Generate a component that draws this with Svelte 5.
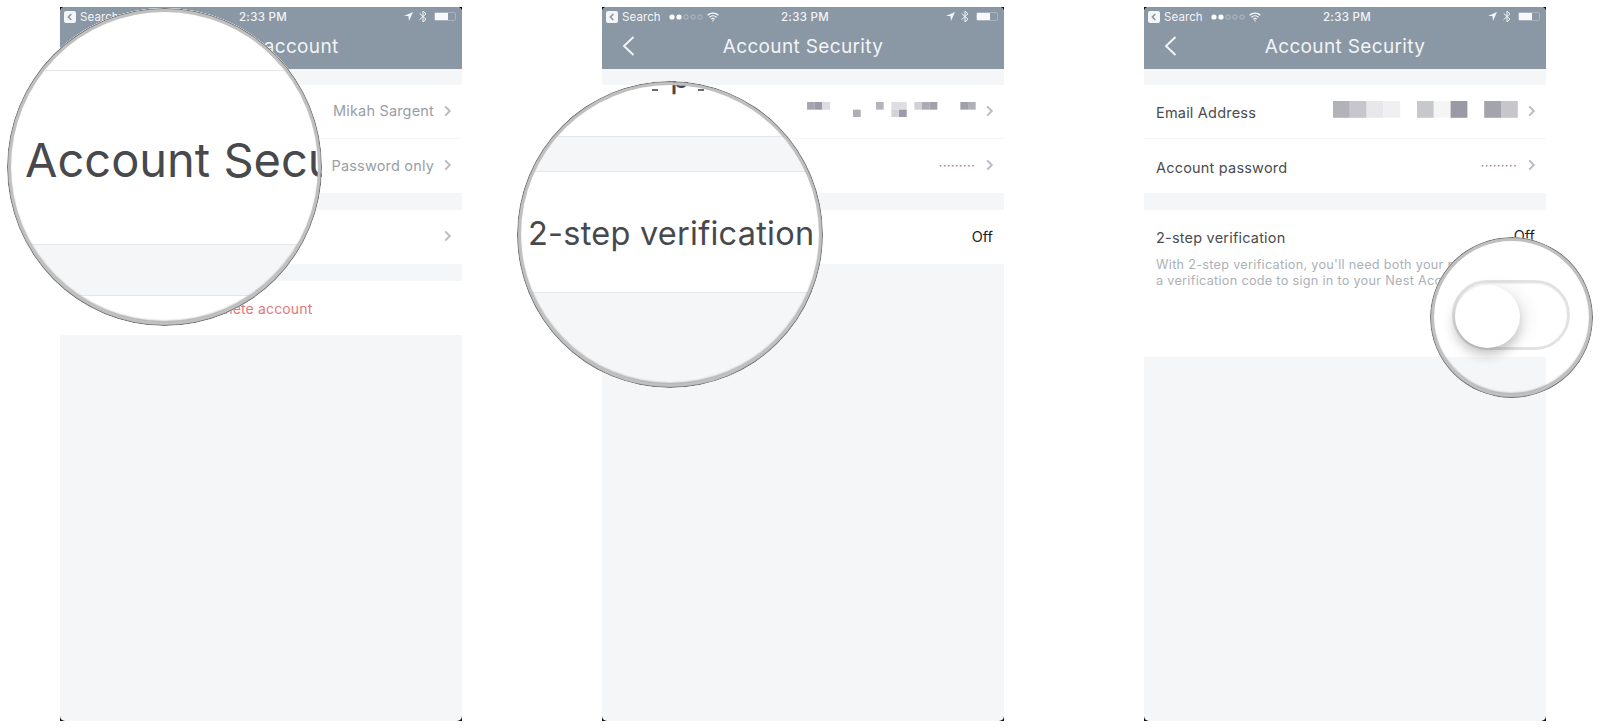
<script>
  const sansStack = "Inter";

  // mosaic used to hide the email address, [column, row, colour]
  const mosaicSmall = [
    [0, 0, "#a5a5b0"], [1, 0, "#9a9aa8"], [2, 0, "#dcdce2"],
    [6, 1, "#aeaeb6"], [9, 0, "#b4b4ba"], [11, 0, "#dedee2"], [12, 0, "#dedee2"],
    [11, 1, "#d2d2d8"], [12, 1, "#9a9aa8"], [14, 0, "#d0d0d6"], [15, 0, "#aaaab4"],
    [16, 0, "#a2a2ac"], [20, 0, "#a0a0ac"], [21, 0, "#b0b0b8"]
  ];
  const mosaicLarge = [
    [0, 0, "#b2b2ba"], [1, 0, "#c6c6cc"], [2, 0, "#e8e8ea"], [3, 0, "#f0f0f2"],
    [5, 0, "#c6c8cc"], [6, 0, "#f5f5f5"], [7, 0, "#9a9aa4"], [9, 0, "#a4a4ac"], [10, 0, "#c6c6cc"]
  ];
</script>

{#snippet statusBar(showCarrier)}
  <div class="status">
    <div class="status-left">
      <svg width="12" height="12" viewBox="0 0 12 12">
        <rect width="12" height="12" rx="2" fill="#f4f5f6" />
        <path d="M7.3 3 4.4 6l2.9 3" fill="none" stroke="#8a97a5" stroke-width="1.6" />
      </svg>
      <span>Search</span>
      {#if showCarrier}
        <svg class="dots" width="34" height="6" viewBox="0 0 34 6">
          <circle cx="3" cy="3" r="2.6" fill="#fff" />
          <circle cx="10" cy="3" r="2.6" fill="#fff" />
          <circle cx="17" cy="3" r="2.2" fill="none" stroke="#c4cad2" stroke-width=".7" />
          <circle cx="24" cy="3" r="2.2" fill="none" stroke="#c4cad2" stroke-width=".7" />
          <circle cx="31" cy="3" r="2.2" fill="none" stroke="#c4cad2" stroke-width=".7" />
        </svg>
        <svg width="12" height="10" viewBox="0 0 12 10" fill="none" stroke="#fff" stroke-width="1.2">
          <path d="M.6 3.2a7.8 7.8 0 0 1 10.8 0" />
          <path d="M2.5 5.2a5 5 0 0 1 7 0" />
          <path d="M4.4 7.1a2.3 2.3 0 0 1 3.2 0" />
          <circle cx="6" cy="8.7" r=".7" fill="#fff" stroke="none" />
        </svg>
      {/if}
    </div>
    <span class="clock">2:33 PM</span>
    <div class="status-right">
      <svg width="9" height="9" viewBox="0 0 9 9"><path d="M9 0 0 4h4.4L5 9z" fill="#f4f5f6" /></svg>
      <svg width="8" height="13" viewBox="0 0 8 13" fill="none" stroke="#f4f5f6" stroke-width="1">
        <path d="M.6 3.4 7 9.2 4 12V1l3 2.8L.6 9.6" />
      </svg>
      <div class="battery"><div class="battery-fill"></div></div>
    </div>
  </div>
{/snippet}

{#snippet header(title, showBack)}
  <div class="nav">
    {#if showBack}
      <svg class="nav-back" width="13" height="20" viewBox="0 0 13 20" fill="none" stroke="#f4f5f6" stroke-width="1.9">
        <path d="M11.5 1 2 10l9.5 9" />
      </svg>
    {/if}
    <span>{title}</span>
  </div>
{/snippet}

{#snippet chevron()}
  <svg class="chevron" width="8" height="12" viewBox="0 0 8 12" fill="none" stroke="#b9bdc3" stroke-width="2">
    <path d="M1.2 1.4 5.8 6l-4.6 4.6" />
  </svg>
{/snippet}

{#snippet mosaic(cells, cols, size, rows)}
  <svg class="mosaic" width={cols * size} height={rows * size} viewBox="0 0 {cols * size} {rows * size}">
    {#each cells as cell}
      <rect x={cell[0] * size} y={cell[1] * size} width={size} height={size} fill={cell[2]} />
    {/each}
  </svg>
{/snippet}

<div class="page" style="font-family: {sansStack}, 'Liberation Sans', sans-serif">
  <!-- first phone -->
  <div class="phone">
    <div class="screen">
      {@render statusBar(false)}
      {@render header("Manage account", false)}
      <div class="group">
        <div class="row">
          <span class="label"></span>
          <span class="value">Mikah Sargent</span>
          {@render chevron()}
        </div>
        <div class="row">
          <span class="label"></span>
          <span class="value">Password only</span>
          {@render chevron()}
        </div>
      </div>
      <div class="group">
        <div class="row">
          <span class="label"></span>
          <span class="value"></span>
          {@render chevron()}
        </div>
      </div>
      <div class="group">
        <div class="row center"><span class="danger">Delete account</span></div>
      </div>
    </div>
    <div class="lens lens-one">
      <div class="band white" style="height: 62px"></div>
      <div class="band white rule big-label" style="height: 174px"><span>Account Security</span></div>
      <div class="band grey rule" style="height: 51px"></div>
      <div class="band white rule" style="flex: 1"></div>
    </div>
  </div>

  <!-- second phone -->
  <div class="phone">
    <div class="screen">
      {@render statusBar(true)}
      {@render header("Account Security", true)}
      <div class="group">
        <div class="row">
          <span class="label"></span>
          {@render mosaic(mosaicSmall, 22, 7.67, 2)}
          {@render chevron()}
        </div>
        <div class="row">
          <span class="label"></span>
          <span class="secret">·········</span>
          {@render chevron()}
        </div>
      </div>
      <div class="group">
        <div class="row">
          <span class="label"></span>
          <span class="state">Off</span>
        </div>
      </div>
    </div>
    <div class="lens lens-two">
      <div class="band white" style="height: 55px"><span class="peek">p</span></div>
      <div class="band grey rule" style="height: 35px"></div>
      <div class="band white rule mid-label" style="height: 121px"><span>2-step verification</span></div>
      <div class="band grey rule" style="flex: 1"></div>
    </div>
  </div>

  <!-- third phone -->
  <div class="phone">
    <div class="screen">
      {@render statusBar(true)}
      {@render header("Account Security", true)}
      <div class="group">
        <div class="row">
          <span class="label">Email Address</span>
          {@render mosaic(mosaicLarge, 11, 16.8, 1)}
          {@render chevron()}
        </div>
        <div class="row">
          <span class="label">Account password</span>
          <span class="secret">·········</span>
          {@render chevron()}
        </div>
      </div>
      <div class="group">
        <div class="row tall">
          <div class="row-top">
            <span class="label">2-step verification</span>
            <span class="state">Off</span>
          </div>
          <p class="hint">With 2-step verification, you'll need both your password and a verification code to sign in to your Nest Account.</p>
        </div>
      </div>
    </div>
    <div class="lens lens-three">
      <div class="lens-toggle">
        <div class="track"><div class="knob"></div></div>
      </div>
      <div class="lens-floor"></div>
    </div>
  </div>
</div>

<style>
  :global(body) {
    background: #fff;
  }
  .page {
    display: flex;
    gap: 140px;
    padding: 7px 0 0 60px;
    height: 721px;
    box-sizing: border-box;
    overflow: hidden;
    color: #4a4c50;
  }
  .phone {
    position: relative;
    flex: 0 0 402px;
    height: 714px;
    background: #111;
  }
  .screen {
    height: 100%;
    display: flex;
    flex-direction: column;
    gap: 17px;
    background: #f4f6f8;
    border-radius: 5px;
    overflow: hidden;
  }
  .status {
    position: absolute;
    top: 0;
    left: 0;
    right: 0;
    height: 19px;
    padding: 0 6px 0 4px;
    display: grid;
    grid-template-columns: 1fr auto 1fr;
    align-items: center;
    color: #f4f5f6;
    font-size: 11.5px;
    z-index: 1;
  }
  .status-left {
    display: flex;
    align-items: center;
    gap: 4px;
    letter-spacing: 0.1px;
  }
  .dots {
    margin-left: 4px;
  }
  .clock {
    font-weight: 500;
    letter-spacing: 0.3px;
    margin-left: 6px;
  }
  .status-right {
    display: flex;
    align-items: center;
    justify-content: flex-end;
    gap: 6px;
  }
  .battery {
    width: 22px;
    height: 9px;
    border: 1px solid #aab3bd;
    border-radius: 2px;
    box-sizing: border-box;
    margin-left: 1px;
  }
  .battery-fill {
    width: 13px;
    height: 100%;
    background: #f8f9fa;
  }
  .nav {
    position: relative;
    height: 62px;
    flex: none;
    padding-top: 16px;
    box-sizing: border-box;
    background: #8a97a5;
    display: flex;
    align-items: center;
    justify-content: center;
    color: #f2f4f6;
    font-size: 19px;
    letter-spacing: 0.35px;
    margin-bottom: -1px;
  }
  .nav-back {
    position: absolute;
    left: 20px;
    top: 29px;
  }
  .group {
    background: #fff;
  }
  .row {
    height: 54px;
    padding: 0 11px 0 12px;
    display: flex;
    align-items: center;
    gap: 8px;
    box-sizing: border-box;
    border-bottom: 1px solid #f5f6f8;
    font-size: 14.5px;
  }
  .row:last-child {
    border-bottom: 0;
  }
  .row.center {
    justify-content: center;
  }
  .row.tall {
    height: 147px;
    display: block;
    padding-top: 10px;
  }
  .row-top {
    display: flex;
    justify-content: space-between;
    align-items: center;
    height: 32px;
  }
  .label {
    flex: 1;
    letter-spacing: 0.2px;
    margin-top: 2px;
  }
  .value {
    color: #9a9ea6;
    letter-spacing: 0.18px;
    margin-top: -2px;
  }
  .secret {
    color: #858a92;
    font-size: 13px;
    letter-spacing: 0.3px;
    margin-top: -3px;
    margin-right: 1px;
  }
  .state {
    color: #1f2022;
    font-size: 14.5px;
    margin-top: -2px;
  }
  .danger {
    color: #df777d;
    font-size: 14px;
    letter-spacing: 0.15px;
  }
  .chevron {
    flex: none;
    margin: -2px -1px 0 2px;
  }
  .mosaic {
    flex: none;
    margin-top: -4px;
    filter: blur(0.3px);
  }
  .hint {
    margin: 5px -10px 0 0;
    font-size: 12.7px;
    line-height: 16px;
    color: #adb1b7;
    letter-spacing: 0.28px;
  }

  /* magnifiers sit over the phones */
  .lens {
    position: absolute;
    display: flex;
    flex-direction: column;
    border-radius: 50%;
    overflow: hidden;
    background: #fff;
    box-sizing: border-box;
    z-index: 2;
  }
  .lens::after {
    content: "";
    position: absolute;
    inset: 0;
    border-radius: 50%;
    border: 1px solid #727272;
    box-shadow: inset 0 0 0 3px #c0c0c0, inset 0 -2px 2px 2px #a6a6a6;
  }
  .lens-one {
    left: -53px;
    top: 1px;
    width: 315px;
    height: 318px;
  }
  .lens-two {
    left: -85px;
    top: 74px;
    width: 306px;
    height: 307px;
  }
  .lens-three {
    left: 286px;
    top: 230px;
    width: 163px;
    height: 161px;
  }
  .band {
    flex: none;
    box-sizing: border-box;
    display: flex;
    align-items: center;
    white-space: nowrap;
  }
  .white {
    background: #fff;
  }
  .grey {
    background: #f4f6f8;
  }
  .rule {
    border-top: 1px solid #e4e6e8;
  }
  .big-label {
    padding: 4px 0 0 18px;
    font-size: 47px;
    color: #47494c;
  }
  .mid-label {
    padding: 3px 0 0 11px;
    font-size: 32.5px;
    letter-spacing: 0.25px;
    color: #47494c;
  }
  .peek {
    position: relative;
    margin: -64px 0 0 153px;
    font-size: 33px;
    line-height: 33px;
    color: #47494c;
  }
  .peek::before,
  .peek::after {
    content: "";
    position: absolute;
    top: 29px;
    width: 6px;
    height: 2px;
    background: #6a6c70;
  }
  .peek::before {
    left: -18px;
  }
  .peek::after {
    left: 28px;
  }
  .lens-toggle {
    flex: none;
    height: 120px;
    padding: 43px 0 0 22px;
    box-sizing: border-box;
  }
  .track {
    position: relative;
    width: 118px;
    height: 70px;
    box-sizing: border-box;
    border: 3px solid #e2e2e2;
    border-radius: 35px;
    background: #fff;
    box-shadow: inset 1px 1px 2px rgba(0, 0, 0, 0.06);
  }
  .knob {
    position: absolute;
    left: 0;
    top: 2px;
    width: 65px;
    height: 63px;
    border-radius: 50%;
    background: #fff;
    box-shadow: -1px 7px 12px rgba(0, 0, 0, 0.22), 10px 0 16px rgba(0, 0, 0, 0.05);
  }
  .lens-floor {
    flex: 1;
    width: 116px;
    background: #f4f6f8;
  }
</style>
